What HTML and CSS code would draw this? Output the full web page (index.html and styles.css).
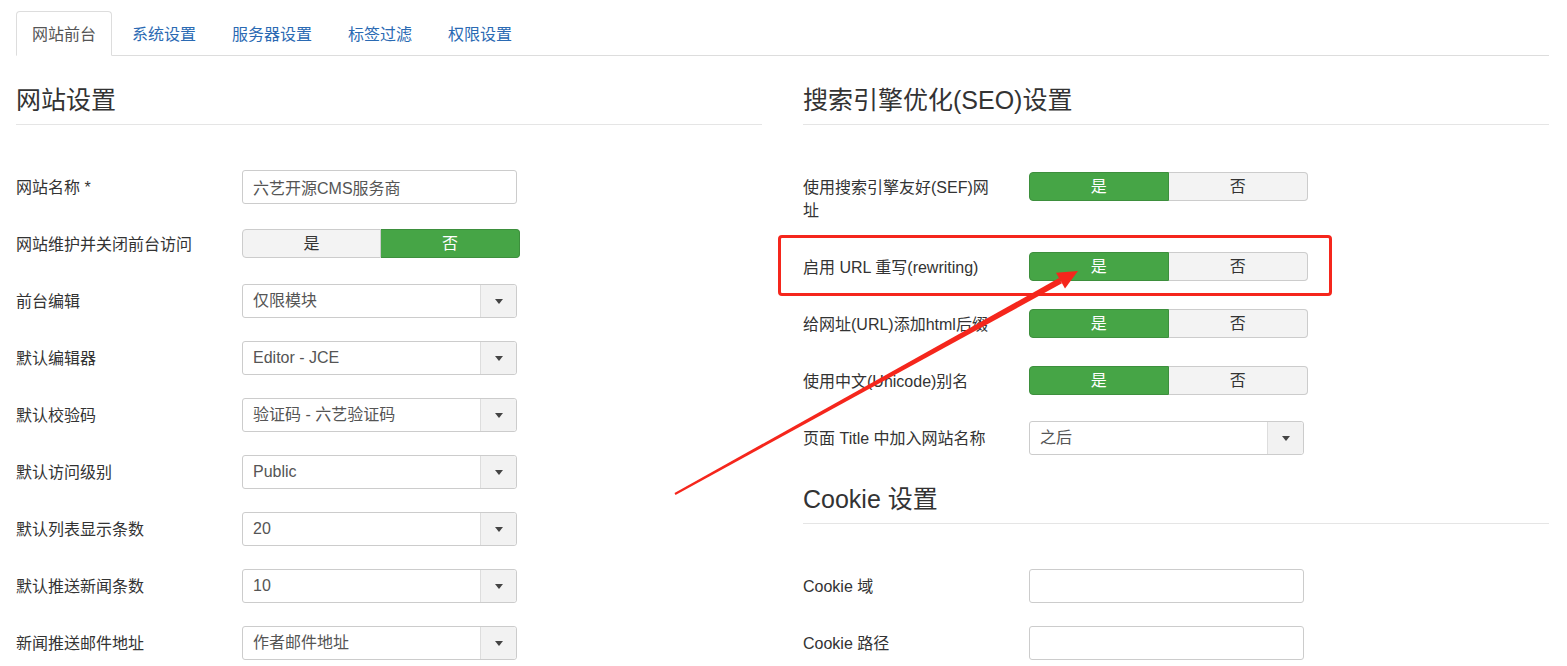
FILE: index.html
```html
<!DOCTYPE html>
<html lang="zh-CN">
<head>
    <meta charset="UTF-8">
    <meta name="viewport" content="width=device-width, initial-scale=1.0">
    <title>全局设置</title>
    <link rel="stylesheet" href="styles.css">
</head>
<body>
<div class="page">
    <ul class="nav-tabs">
        <li class="active"><a href="#">网站前台</a></li>
        <li><a href="#">系统设置</a></li>
        <li><a href="#">服务器设置</a></li>
        <li><a href="#">标签过滤</a></li>
        <li><a href="#">权限设置</a></li>
    </ul>

    <div class="tab-content">
        <!-- left column -->
        <div class="column">
            <h3 class="section-title">网站设置</h3>

            <div class="control-group">
                <label class="control-label">网站名称 *</label>
                <input class="text-input" type="text" value="六艺开源CMS服务商">
            </div>

            <div class="control-group">
                <label class="control-label">网站维护并关闭前台访问</label>
                <div class="btn-group">
                    <span class="btn">是</span>
                    <span class="btn on">否</span>
                </div>
            </div>

            <div class="control-group">
                <label class="control-label">前台编辑</label>
                <div class="select"><span class="select-value">仅限模块</span><span class="select-arrow"></span></div>
            </div>

            <div class="control-group">
                <label class="control-label">默认编辑器</label>
                <div class="select"><span class="select-value">Editor - JCE</span><span class="select-arrow"></span></div>
            </div>

            <div class="control-group">
                <label class="control-label">默认校验码</label>
                <div class="select"><span class="select-value">验证码 - 六艺验证码</span><span class="select-arrow"></span></div>
            </div>

            <div class="control-group">
                <label class="control-label">默认访问级别</label>
                <div class="select"><span class="select-value">Public</span><span class="select-arrow"></span></div>
            </div>

            <div class="control-group">
                <label class="control-label">默认列表显示条数</label>
                <div class="select"><span class="select-value">20</span><span class="select-arrow"></span></div>
            </div>

            <div class="control-group">
                <label class="control-label">默认推送新闻条数</label>
                <div class="select"><span class="select-value">10</span><span class="select-arrow"></span></div>
            </div>

            <div class="control-group">
                <label class="control-label">新闻推送邮件地址</label>
                <div class="select"><span class="select-value">作者邮件地址</span><span class="select-arrow"></span></div>
            </div>
        </div>

        <!-- right column -->
        <div class="column">
            <h3 class="section-title">搜索引擎优化(SEO)设置</h3>

            <div class="control-group">
                <label class="control-label">使用搜索引擎友好(SEF)网址</label>
                <div class="btn-group wide">
                    <span class="btn on">是</span>
                    <span class="btn">否</span>
                </div>
            </div>

            <div class="control-group">
                <label class="control-label">启用 URL 重写(rewriting)</label>
                <div class="btn-group wide">
                    <span class="btn on">是</span>
                    <span class="btn">否</span>
                </div>
            </div>

            <div class="control-group">
                <label class="control-label">给网址(URL)添加html后缀</label>
                <div class="btn-group wide">
                    <span class="btn on">是</span>
                    <span class="btn">否</span>
                </div>
            </div>

            <div class="control-group">
                <label class="control-label">使用中文(Unicode)别名</label>
                <div class="btn-group wide">
                    <span class="btn on">是</span>
                    <span class="btn">否</span>
                </div>
            </div>

            <div class="control-group">
                <label class="control-label">页面 Title 中加入网站名称</label>
                <div class="select"><span class="select-value">之后</span><span class="select-arrow"></span></div>
            </div>

            <h3 class="section-title cookie">Cookie 设置</h3>

            <div class="control-group">
                <label class="control-label">Cookie 域</label>
                <input class="text-input" type="text" value="">
            </div>

            <div class="control-group">
                <label class="control-label">Cookie 路径</label>
                <input class="text-input" type="text" value="">
            </div>
        </div>
    </div>

    <!-- annotation drawn over the screenshot -->
    <div class="highlight"></div>
    <svg class="arrow" width="1567" height="666" viewBox="0 0 1567 666">
        <polygon points="674.5,493.1 675.5,494.9 1062,283.3 1059,278.1" fill="#f5261c"/>
        <polygon points="1078,271 1056,272.8 1065,288.6" fill="#f5261c"/>
    </svg>
</div>
</body>
</html>
```

FILE: styles.css
```css
body {
    margin: 0;
    background: #fff;
    color: #333;
    font-family: "Liberation Sans", "Noto Sans CJK SC", sans-serif;
    font-size: 16px;
}

.page {
    position: relative;
    padding: 11px 18px 0 16px;
    height: 655px;
    overflow: hidden;
}

/* tabs */
.nav-tabs {
    display: flex;
    list-style: none;
    margin: 0;
    padding: 0;
    border-bottom: 1px solid #ddd;
}

.nav-tabs li {
    margin-right: 4px;
    margin-bottom: -1px;
}

.nav-tabs a {
    display: block;
    height: 43px;
    line-height: 45px;
    padding: 0 15px;
    border: 1px solid transparent;
    border-radius: 4px 4px 0 0;
    color: #2a6ab3;
    text-decoration: none;
}

.nav-tabs .active a {
    color: #555;
    background: #fff;
    border-color: #ddd;
    border-bottom-color: #fff;
}

/* columns */
.tab-content {
    display: grid;
    grid-template-columns: 1fr 1fr;
    column-gap: 41px;
    padding-top: 22px;
}

.column {
    min-width: 0;
}

.section-title {
    margin: 7px 0 45px;
    padding-bottom: 9px;
    border-bottom: 1px solid #e5e5e5;
    font-size: 25px;
    font-weight: normal;
    line-height: 30px;
    color: #333;
}

.section-title.cookie {
    margin-top: 29px;
}

.control-group {
    display: flex;
    align-items: flex-start;
    margin-bottom: 23px;
}

.control-label {
    flex: 0 0 194px;
    margin-right: 32px;
    padding: 6px 0 5px;
    line-height: 23px;
}

/* fields */
.text-input {
    box-sizing: border-box;
    width: 275px;
    height: 34px;
    margin: 0;
    padding: 0 10px;
    border: 1px solid #ccc;
    border-radius: 3px;
    font: inherit;
    color: #555;
    outline: 0;
}

.select {
    box-sizing: border-box;
    display: flex;
    width: 275px;
    height: 34px;
    border: 1px solid #ccc;
    border-radius: 3px;
}

.select-value {
    flex: 1;
    padding-left: 10px;
    line-height: 32px;
    color: #555;
}

.select-arrow {
    display: flex;
    align-items: center;
    justify-content: center;
    width: 35px;
    border-left: 1px solid #ddd;
    border-radius: 0 3px 3px 0;
    background: #f2f2f2;
}

.select-arrow::after {
    content: "";
    border-left: 4px solid transparent;
    border-right: 4px solid transparent;
    border-top: 5px solid #444;
}

/* yes / no switch */
.btn-group {
    display: flex;
    width: 278px;
    height: 29px;
    margin-top: 2px;
}

.btn-group.wide {
    width: 279px;
}

.btn {
    flex: 0 0 50%;
    box-sizing: border-box;
    text-align: center;
    line-height: 27px;
    border: 1px solid #ccc;
    background: #f3f3f3;
    color: #333;
}

.btn:first-child {
    border-radius: 4px 0 0 4px;
}

.btn:last-child {
    border-left: 0;
    border-radius: 0 4px 4px 0;
}

.btn.on {
    background: #46a546;
    border-color: #3d8f3d;
    color: #fff;
}

/* annotation */
.highlight {
    position: absolute;
    left: 778px;
    top: 235px;
    width: 554px;
    height: 61px;
    box-sizing: border-box;
    border: 3px solid #f5261c;
    border-radius: 4px;
}

.arrow {
    position: absolute;
    left: 0;
    top: 0;
    pointer-events: none;
}
```
